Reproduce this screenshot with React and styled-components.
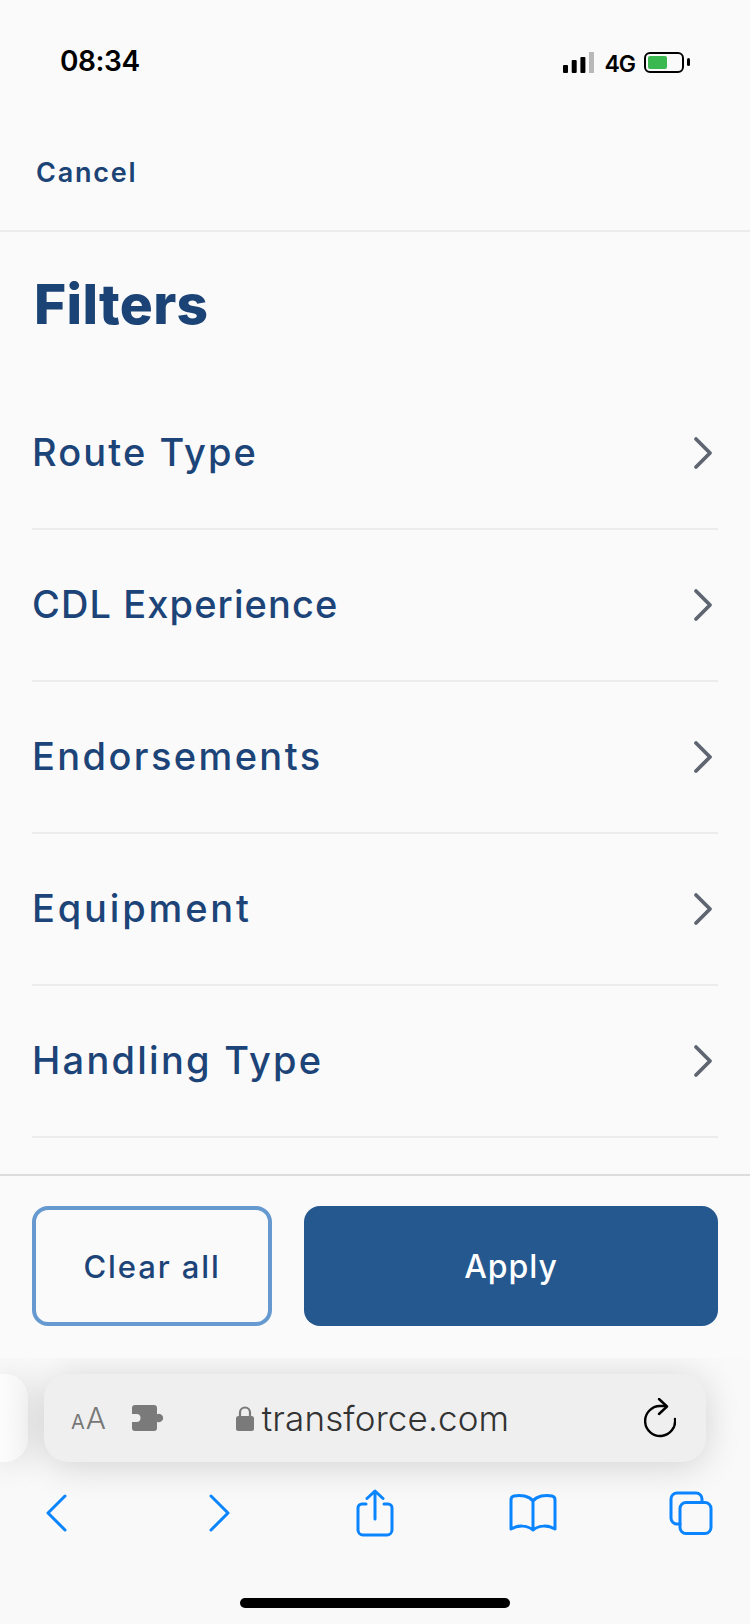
import React from 'react';
import styled, { createGlobalStyle } from 'styled-components';

const Global = createGlobalStyle`
  html, body { margin: 0; padding: 0; background: #fafafa; }
  * { box-sizing: border-box; }
  #root { width: 750px; height: 1624px; }
`;
const Page = styled.div`
  width: 750px; height: 1624px; display: flex; flex-direction: column;
  background: #fafafa; font-family: Inter, "Noto Sans", sans-serif; overflow: hidden;
`;
const StatusBar = styled.div`
  height: 110px; flex: none; display: flex; justify-content: space-between; align-items: flex-start;
  padding: 42px 60px 0 60px;
`;
const Time = styled.div`
  font-size: 28px; line-height: 38px; font-weight: 600; color: #000; letter-spacing: -0.4px;
`;
const StatusIcons = styled.div`
  display: flex; align-items: flex-end; margin-top: 10px;
`;
const NetLabel = styled.span`
  font-size: 23px; line-height: 20px; font-weight: 600; color: #000; margin: 0 9px 0 10px; letter-spacing: -1px;
  height: 19px;
`;
const CancelBar = styled.div`
  height: 122px; flex: none; display: flex; align-items: flex-start; padding: 45px 36px 0;
  border-bottom: 2px solid #ececec;
`;
const CancelLink = styled.a`
  font-size: 27px; line-height: 36px; font-weight: 600; color: #1b4375; letter-spacing: 1.8px;
`;
const Main = styled.main`
  height: 942px; flex: none; padding: 0 32px;
`;
const Title = styled.h1`
  margin: 0; height: 146px; padding: 38px 0 0 2px; font-size: 55px; line-height: 68px; font-weight: 800;
  color: #1b4375; letter-spacing: 0.3px;
`;
const Row = styled.div`
  height: 152px; display: flex; align-items: center; justify-content: space-between;
  border-bottom: 2px solid #ececec;
`;
const RowLabel = styled.span`
  font-size: 38px; font-weight: 500; color: #1c4478; letter-spacing: ${(p) => p.$tracking}px; margin-top: -3px;
`;
const Footer = styled.div`
  height: 184px; flex: none; border-top: 2px solid #dcdcdc; padding: 30px 32px 0;
  display: flex; gap: 32px; align-items: flex-start;
`;
const ClearButton = styled.button`
  width: 240px; height: 120px; border: 4px solid #6699cf; border-radius: 16px; background: #fafafa;
  font: 500 31px Inter, sans-serif; color: #1c4478; padding: 0; letter-spacing: 1.9px;
`;
const ApplyButton = styled.button`
  flex: 1; height: 120px; border: 0; border-radius: 16px; background: #24588f;
  font: 500 32px Inter, sans-serif; color: #fff; padding: 0; letter-spacing: 0.9px;
`;
const Safari = styled.div`
  flex: 1; background: #f9f9f9; overflow: hidden; display: flex; flex-direction: column;
`;
const UrlRow = styled.div`
  display: flex; gap: 16px; padding-top: 16px; flex: none;
`;
const PeekTab = styled.div`
  width: 28px; height: 88px; flex: none; border-radius: 0 24px 24px 0;
  background: linear-gradient(90deg, #fcfcfc, #f5f5f5);
  box-shadow: 0 2px 34px rgba(0,0,0,.14);
`;
const UrlBar = styled.div`
  width: 662px; height: 88px; flex: none; border-radius: 24px; background: #efefef;
  box-shadow: 0 4px 36px rgba(0,0,0,.16); display: flex; align-items: center;
  padding: 0 30px 0 27px; color: #777;
`;
const TextSize = styled.div`
  display: flex; align-items: baseline; gap: 1px; color: #777; width: 61px;
  font-family: Inter, sans-serif; font-weight: 400;
`;
const SmallA = styled.span`font-size: 20px;`;
const BigA = styled.span`font-size: 30px; font-weight: 300;`;
const Host = styled.div`
  flex: 1; display: flex; align-items: center; justify-content: center; gap: 8px; margin-left: 5px;
  font-size: 35px; font-weight: 300; color: #333; letter-spacing: 0.15px; padding-right: 68px;
`;
const Toolbar = styled.div`
  display: grid; grid-template-columns: 164px 155px 158px 158px 44px; padding: 18px 0 0 34px; height: 84px; flex: none;
  align-items: center; justify-items: start;
`;
const ToolSlot = styled.div`
  width: 44px; display: flex; justify-content: center;
`;
const HomeBar = styled.div`
  width: 270px; height: 10px; border-radius: 5px; background: #000; margin: 52px auto 0;
`;
const Icon = styled.svg`display: block; flex: none;`;

const rows = [
  { label: 'Route Type', tracking: 2.1 },
  { label: 'CDL Experience', tracking: 1.1 },
  { label: 'Endorsements', tracking: 2.4 },
  { label: 'Equipment', tracking: 2.85 },
  { label: 'Handling Type', tracking: 2.26 },
];

const Signal = () => (
  <Icon width="31" height="21" viewBox="0 0 31 21">
    <rect x="0" y="13" width="5" height="8" rx="1" fill="#000" />
    <rect x="8.7" y="8" width="5" height="13" rx="1" fill="#000" />
    <rect x="17.4" y="5" width="5" height="16" rx="1" fill="#000" />
    <rect x="26" y="0" width="5" height="21" fill="#b8b8b8" />
  </Icon>
);
const Battery = () => (
  <Icon width="46" height="21" viewBox="0 0 46 21">
    <rect x="1" y="1" width="38" height="19" rx="5" fill="none" stroke="#000" strokeWidth="2" />
    <rect x="4" y="4" width="19" height="13" rx="2" fill="#3cb851" />
    <rect x="43" y="6" width="3" height="8" rx="1.5" fill="#000" />
  </Icon>
);
const Chevron = () => (
  <Icon width="22" height="36" viewBox="0 0 22 36" style={{ marginRight: 4 }}>
    <path d="M4 4 L18 18 L4 32" fill="none" stroke="#5f6672" strokeWidth="3.8" strokeLinecap="round" strokeLinejoin="round" />
  </Icon>
);
const Puzzle = () => (
  <Icon width="32" height="26" viewBox="0 0 32 26">
    <path fill="#7a7a7a" d="M3 0 H22 a3 3 0 0 1 3 3 V9.3 a4.2 4.2 0 1 1 0 7.4 V23 a3 3 0 0 1 -3 3 H3 a3 3 0 0 1 -3 -3 V17 H4.5 a4 4 0 0 0 0 -8 H0 V3 a3 3 0 0 1 3 -3 Z" />
  </Icon>
);
const Lock = () => (
  <Icon width="18" height="26" viewBox="0 0 18 26">
    <path d="M4 12 V7.5 a5 5 0 0 1 10 0 V12" fill="none" stroke="#7a7a7a" strokeWidth="2.2" />
    <rect x="0" y="11" width="18" height="15" rx="2.5" fill="#7a7a7a" />
  </Icon>
);
const Reload = () => (
  <Icon width="32" height="40" viewBox="0 0 32 40">
    <path d="M31 21 A15 15 0 1 1 16 8 H22" fill="none" stroke="#000" strokeWidth="2.4" strokeLinecap="round" />
    <path d="M15 1 L23 8.5 L15 16" fill="none" stroke="#000" strokeWidth="2.4" strokeLinecap="round" strokeLinejoin="round" />
  </Icon>
);
const blue = { fill: 'none', stroke: '#0a84ff', strokeWidth: 3, strokeLinecap: 'round', strokeLinejoin: 'round' };
const Back = () => (
  <Icon width="22" height="38" viewBox="0 0 22 38"><path {...blue} d="M20 2 L3 19 L20 36" /></Icon>
);
const Forward = () => (
  <Icon width="22" height="38" viewBox="0 0 22 38"><path {...blue} d="M2 2 L19 19 L2 36" /></Icon>
);
const Share = () => (
  <Icon width="38" height="48" viewBox="0 0 38 48">
    <path {...blue} d="M10 15 H6 a4 4 0 0 0 -4 4 V41 a5 5 0 0 0 5 5 H31 a5 5 0 0 0 5 -5 V19 a4 4 0 0 0 -4 -4 H28" />
    <path {...blue} d="M19 30 V2 M11 9.5 L19 2 L27 9.5" />
  </Icon>
);
const Book = () => (
  <Icon width="48" height="40" viewBox="0 0 48 40">
    <path {...blue} d="M24 8 C20 3 12 1.5 5 3 C3 3.4 2 5 2 7 V36 C9 32 18 32 24 37 C30 32 39 32 46 36 V7 C46 5 45 3.4 43 3 C36 1.5 28 3 24 8 Z M24 8 V37" />
  </Icon>
);
const Tabs = () => (
  <Icon width="44" height="44" viewBox="0 0 44 44">
    <path {...blue} d="M11 33 H8 a6 6 0 0 1 -6 -6 V8 a6 6 0 0 1 6 -6 H27 a6 6 0 0 1 6 6 V11" />
    <rect {...blue} x="11" y="11.5" width="31" height="31" rx="6" />
  </Icon>
);

export default function App() {
  return (
    <Page>
      <Global />
      <StatusBar>
        <Time>08:34</Time>
        <StatusIcons>
          <Signal />
          <NetLabel>4G</NetLabel>
          <Battery />
        </StatusIcons>
      </StatusBar>
      <CancelBar><CancelLink>Cancel</CancelLink></CancelBar>
      <Main>
        <Title>Filters</Title>
        {rows.map((r) => (
          <Row key={r.label}><RowLabel $tracking={r.tracking}>{r.label}</RowLabel><Chevron /></Row>
        ))}
      </Main>
      <Footer>
        <ClearButton>Clear all</ClearButton>
        <ApplyButton>Apply</ApplyButton>
      </Footer>
      <Safari>
        <UrlRow>
          <PeekTab />
          <UrlBar>
            <TextSize><SmallA>A</SmallA><BigA>A</BigA></TextSize>
            <Puzzle />
            <Host><Lock />transforce.com</Host>
            <Reload />
          </UrlBar>
        </UrlRow>
        <Toolbar>
          <ToolSlot><Back /></ToolSlot>
          <ToolSlot><Forward /></ToolSlot>
          <ToolSlot><Share /></ToolSlot>
          <ToolSlot><Book /></ToolSlot>
          <ToolSlot><Tabs /></ToolSlot>
        </Toolbar>
        <HomeBar />
      </Safari>
    </Page>
  );
}
